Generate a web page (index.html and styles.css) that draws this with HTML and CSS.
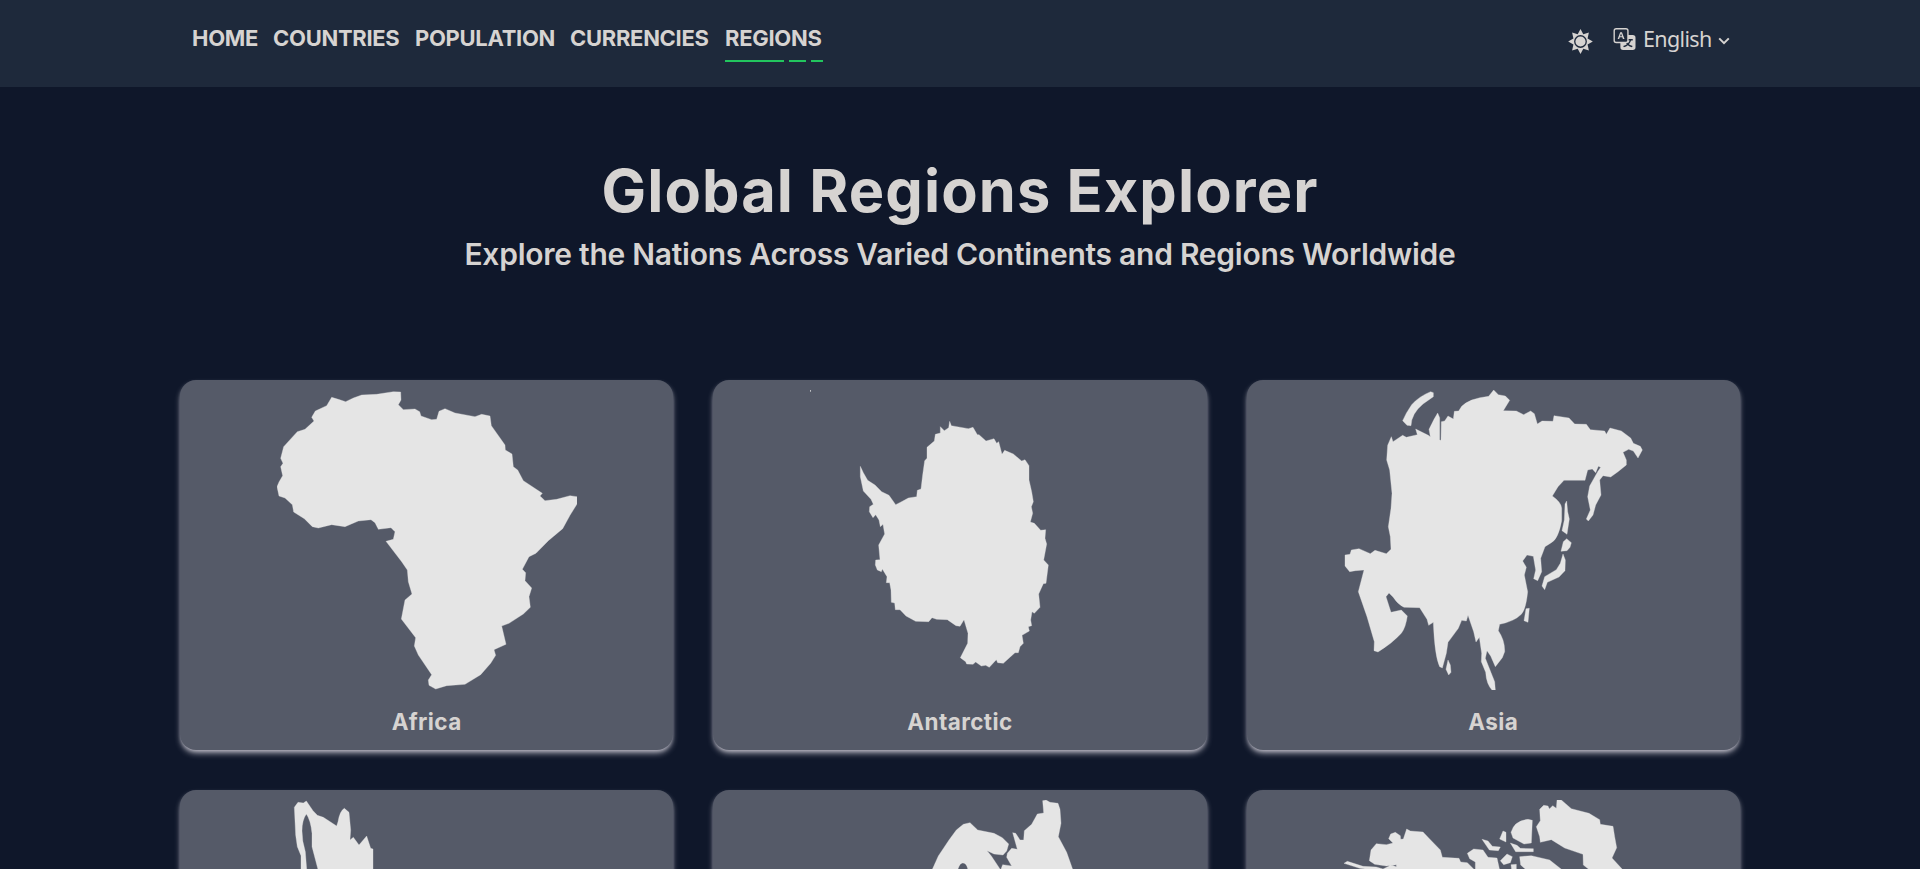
FILE: index.html
```
<!DOCTYPE html>
<html lang="en">
<head>
<meta charset="utf-8">
<title>Global Regions Explorer</title>
<link rel="stylesheet" href="styles.css">
</head>
<body>
<header class="header">
  <nav class="nav">
    <a class="nav-link home">HOME</a>
    <a class="nav-link countries">COUNTRIES</a>
    <a class="nav-link population">POPULATION</a>
    <a class="nav-link currencies">CURRENCIES</a>
    <a class="nav-link regions">REGIONS<span class="underline"><i class="dash-long"></i><i class="dash-mid"></i><i class="dash-short"></i></span></a>
  </nav>
  <div class="tools">
    <svg class="sun" viewBox="84 56 75 76"><path d="M121.500 56L130 72L147 67L143 85L159 94L143 103L147 121L130 116L121.500 132L113 116L96 121L100 103L84 94L100 85L96 67L113 72Z"/><circle class="sun-ring" cx="121.500" cy="94" r="17.500"/></svg>
    <div class="language">
      <svg class="translate" viewBox="0 0 16 16"><path d="M0 2a2 2 0 0 1 2-2h7a2 2 0 0 1 2 2v3h3a2 2 0 0 1 2 2v7a2 2 0 0 1-2 2H7a2 2 0 0 1-2-2v-3H2a2 2 0 0 1-2-2V2zm2-1a1 1 0 0 0-1 1v7a1 1 0 0 0 1 1h7a1 1 0 0 0 1-1V2a1 1 0 0 0-1-1H2zm7.138 9.995c.193.301.402.583.63.846-.748.575-1.673 1.001-2.768 1.292.178.217.451.635.555.867 1.125-.359 2.080-.844 2.886-1.494.777.665 1.739 1.165 2.930 1.472.133-.254.414-.673.629-.890-1.125-.253-2.057-.694-2.820-1.284.681-.747 1.222-1.651 1.621-2.757H14V8h-3v1.047h.765c-.318.844-.740 1.546-1.272 2.130a6.066 6.066 0 0 1-.415-.492 1.988 1.988 0 0 1-.940.310z"/><path d="M4.545 6.714 4.110 8H3l1.862-5h1.284L8 8H6.833l-.435-1.286H4.545zm1.634-.736L5.500 3.956h-.049l-.679 2.022H6.180z"/></svg>
      <span class="language-name">English</span>
      <svg class="chevron" viewBox="0 0 12 8"><path d="M1.200 1.400L6 6.200L10.800 1.400"/></svg>
    </div>
  </div>
</header>
<main class="main">
  <section class="intro">
    <h1 class="title">Global Regions Explorer</h1>
    <p class="subtitle">Explore the Nations Across Varied Continents and Regions Worldwide</p>
  </section>
  <section class="grid">
    <article class="card">
      <svg class="map" viewBox="321 60 900 900"><path d="M485 82L505 88L527 95L550 84L575 75L620 73L670 65L692 66L693 90L685 104L700 119L735 117L749 125L753 138L785 149L800 148L807 124L825 116L855 129L915 140L935 133L960 138L964 167L1005 225L1006 240L1026 252L1030 290L1043 300L1060 332L1117 370L1110 378L1125 392L1160 388L1200 377L1221 380L1221 402L1200 436L1178 476L1135 512L1098 550L1077 560L1057 598L1067 608L1065 632L1085 654L1077 680L1081 712L1060 732L1017 760L995 768L1008 823L972 839L977 856L962 880L932 914L885 943L830 947L797 957L777 946L775 930L785 914L745 855L733 828L737 803L694 747L705 690L726 672L715 635L712 600L695 575L648 514L670 508L675 485L663 473L625 478L615 458L603 449L565 453L525 470L485 464L445 474L427 470L403 446L371 426L367 404L345 384L327 378L321 350L327 336L338 317L332 290L339 280L332 265L341 230L382 185L405 178L432 153L425 142L436 123L470 107Z"/></svg>
      <h2 class="card-name">Africa</h2>
    </article>
    <article class="card">
      <svg class="map" viewBox="330 60 900 900"><path d="M330 60h2l-1 6z"/><path d="M481 289L490 308L503 331L525 345L545 365L567 376L587 404L603 396L625 384L650 380L652 361L663 357L668 315L674 272L681 265L681 232L703 213L706 193L721 189L721 170L733 182L746 173L749 154L754 167L805 176L819 172L832 194L837 194L858 213L882 206L890 220L896 215L906 253L914 241L940 252L965 273L975 269L987 287L987 330L995 365L1000 395L994 410L998 430L991 456L1003 460L1022 481L1037 479L1035 505L1040 522L1031 570L1045 585L1038 640L1030 641L1016 672L1020 712L1003 730L996 725L992 750L995 767L985 770L988 783L966 796L970 820L960 830L955 848L945 848L910 880L893 878L889 869L868 892L857 886L844 888L827 876L819 883L800 882L797 875L781 863L803 820L804 790L792 749L780 769L768 767L742 749L710 748L696 743L686 755L647 754L618 738L600 719L586 719L584 699L574 697L573 660L569 638L559 638L561 620L547 597L544 605L532 600L526 585L527 570L540 569L536 525L554 492L549 463L541 470L537 450L527 434L519 443L508 425L509 410L520 403L513 388L490 363L481 320Z"/></svg>
      <h2 class="card-name">Antarctic</h2>
    </article>
    <article class="card">
      <svg class="map" viewBox="340 60 900 900"><path d="M603 65L611 68V80L580 102Q545 131 544 167L532 166L519 152Q528 130 546 104Q568 79 603 65ZM485 200L490 215L519 196L530 202L563 194L558 177L596 196L602 200L598 178L613 148L624 129L630 143V210L634 211L635 155L645 153L655 138L671 147L674 124L687 123L696 109Q720 85 777 79L792 60L806 74L827 78L840 91L821 122L860 123L882 134L903 123L914 131L923 162L937 153L970 154L973 137L1018 144L1035 162L1070 163L1082 179L1125 183L1130 193L1141 174L1175 183L1203 204L1211 220L1232 229L1238 240L1225 264L1211 243L1197 238L1180 247L1190 270V285L1165 305L1143 321L1120 317L1110 330L1114 375L1098 405L1090 435L1076 453L1070 447L1082 420L1074 380L1080 348L1104 305L1113 292L1106 289L1098 308L1088 297L1074 300L1066 331H1003L985 350L968 378Q996 398 996 415V452Q986 507 965 518L946 530L933 565L936 605L924 632L912 626L918 600L911 559L892 555L879 573L890 592L884 615L894 665Q889 717 875 733Q854 754 810 763L806 782Q826 811 825 845L818 863L797 890L783 858L772 842L767 865L775 885L795 935L797 960H787Q770 942 768 907L755 875L756 850L749 802L739 816L732 785L715 736L710 753L696 751L686 775L655 817L650 850L638 894L630 890Q615 860 611 757L597 766L592 748L570 713L523 712Q505 704 490 681L478 669L469 680L484 727L515 720L533 738Q528 773 515 790Q488 820 445 846L433 842L434 815L412 740L386 665L403 600L377 602L360 605L346 588V555L361 553L365 540L388 536L422 551L436 541L470 551L484 538L482 500L476 470L484 415L487 370L480 300L471 270L474 226Z"/><path d="M1011 393L1014 425L1019 447L1012 493L997 482L1004 450L1006 402ZM1011 506L1025 518L1021 532L1012 542L994 544L1001 515ZM1000 552L1007 570L1006 602L988 621L953 637L945 659L937 648L945 620L980 599L992 580ZM889 716L899 715L895 757L883 752ZM655 870L662 885L664 907L657 915L649 898Z"/></svg>
      <h2 class="card-name">Asia</h2>
    </article>
    <article class="card">
      <svg class="map" viewBox="321 210 900 900"><path d="M373 232L384 217L400 219L409 213L429 242L442 256L460 262L500 288L504 275Q510 242 523 235L537 247L542 300L540 330L550 322L567 345L590 318L602 355L609 357V1000H700L393 417V377L382 350L377 315ZM409 252Q396 270 396 303Q396 335 406 365L411 430H447L426 350V310Q422 270 409 252Z" fill-rule="evenodd"/></svg>
    </article>
    <article class="card">
      <svg class="map" viewBox="330 90 900 900"><path fill-rule="evenodd" d="M697 298L715 258L747 210L769 180L790 163L810 158L833 180L882 190L907 203L926 222L920 243L909 255L882 252L861 242L874 258L902 300L908 284L935 288L920 262L922 250L935 235L952 238L938 188L947 190L960 210L971 210L973 182L995 163L1012 132L1031 129L1028 92L1038 90L1050 97L1074 100L1080 118L1083 160L1075 200L1100 247L1118 298V600H697ZM773 300H804Q800 278 788 279Q779 279 773 300Z"/></svg>
    </article>
    <article class="card">
      <svg class="map" viewBox="340 90 900 900"><path d="M343 280L353 274L400 289L440 291L460 297L485 285L500 290V284L470 288L435 283L419 272L424 240L440 221L470 224L490 219L477 206L483 192L497 187L512 197L513 208L521 207L531 177L542 183L580 186L600 207L632 240L638 262L688 265L693 276L713 278L735 300V600H460L430 300L390 295ZM713 250L732 237L760 240L775 262L802 264L810 300H737V276L720 266ZM757 208L775 213L788 229L812 231L806 242L779 240ZM820 183L829 187V216L810 207ZM844 187Q854 152 895 148L908 151L905 219L883 222L850 204ZM842 219L862 226L872 235L911 236V245L858 245ZM812 272L832 252L848 260L842 278L822 284ZM844 284L860 283V300H846ZM870 260L905 257L960 270L998 300H890L873 285ZM920 170L932 152L930 118L942 106L955 108L959 117L969 107L980 115L982 90H995L1025 116L1078 130L1110 149L1112 163L1150 169L1155 200L1161 233L1147 264L1180 300H1080L1061 285L1060 253L1005 234L965 209L932 217L930 200Z"/></svg>
    </article>
  </section>
</main>
</body>
</html>
```

FILE: styles.css
```
* { box-sizing: border-box; }
body {
  margin: 0;
  background: #0f172a;
  color: #d6d3d1;
  font-family: Inter, "Open Sans", sans-serif;
}
.header {
  height: 87px;
  padding: 0 190px 0 192px;
  background: #1e293b;
  display: flex;
  justify-content: space-between;
  align-items: flex-start;
}
.main { height: 782px; overflow: hidden; }
.nav { display: flex; gap: 15px; padding-top: 22px; }
.nav-link {
  display: block;
  height: 40px;
  font-size: 22px;
  line-height: 32px;
  font-weight: 700;
  letter-spacing: -0.3px;
  white-space: nowrap;
}
.home { width: 66px; }
.countries { width: 127px; }
.population { width: 140px; }
.currencies { width: 140px; }
.regions { width: 98px; }
.underline { display: flex; gap: 5px; height: 2px; margin-top: 6px; }
.dash-long, .dash-mid, .dash-short { background: #22c55e; height: 2px; }
.dash-long { width: 59px; }
.dash-mid { width: 17px; }
.dash-short { width: 12px; }
.tools { display: flex; gap: 20px; padding-top: 28px; }
.sun { width: 25px; height: 25px; fill: #d6d3d1; margin-top: 1px; }
.sun-ring { fill: #d6d3d1; stroke: #1e293b; stroke-width: 4; }
.language { display: flex; align-items: flex-start; }
.translate { width: 23px; height: 22px; fill: #d6d3d1; }
.language-name {
  width: 69px;
  margin: -3px 6px 0 7px;
  font: 400 21.500px/27px "Noto Sans", sans-serif;
  letter-spacing: -0.650px;
}
.chevron { width: 12px; height: 8px; margin-top: 9px; fill: none; stroke: #d6d3d1; stroke-width: 2; }
.intro { height: 293px; padding-top: 61px; text-align: center; }
.title { margin: 0; font-size: 59.500px; line-height: 84px; font-weight: 700; letter-spacing: 1.100px; }
.subtitle { margin: 0; font-size: 30px; line-height: 44px; font-weight: 600; letter-spacing: -0.260px; }
.grid {
  display: grid;
  grid-template-columns: repeat(3, 1fr);
  gap: 40px;
  width: 1560px;
  margin: 0 auto;
}
.card {
  height: 370px;
  padding-top: 10px;
  display: flex;
  flex-direction: column;
  align-items: center;
  background: #555a68;
  border-radius: 16px;
  box-shadow: 0 4px 6px -1px rgba(214, 211, 220, .75), 0 2px 4px -2px rgba(214, 211, 220, .75);
}
.map { width: 300px; height: 300px; fill: #e5e5e5; stroke: #e5e5e5; stroke-width: 1; stroke-linejoin: round; }
.card-name { margin: 15px 0 0; font-size: 22.500px; line-height: 34px; font-weight: 700; letter-spacing: 0.400px; }
```
